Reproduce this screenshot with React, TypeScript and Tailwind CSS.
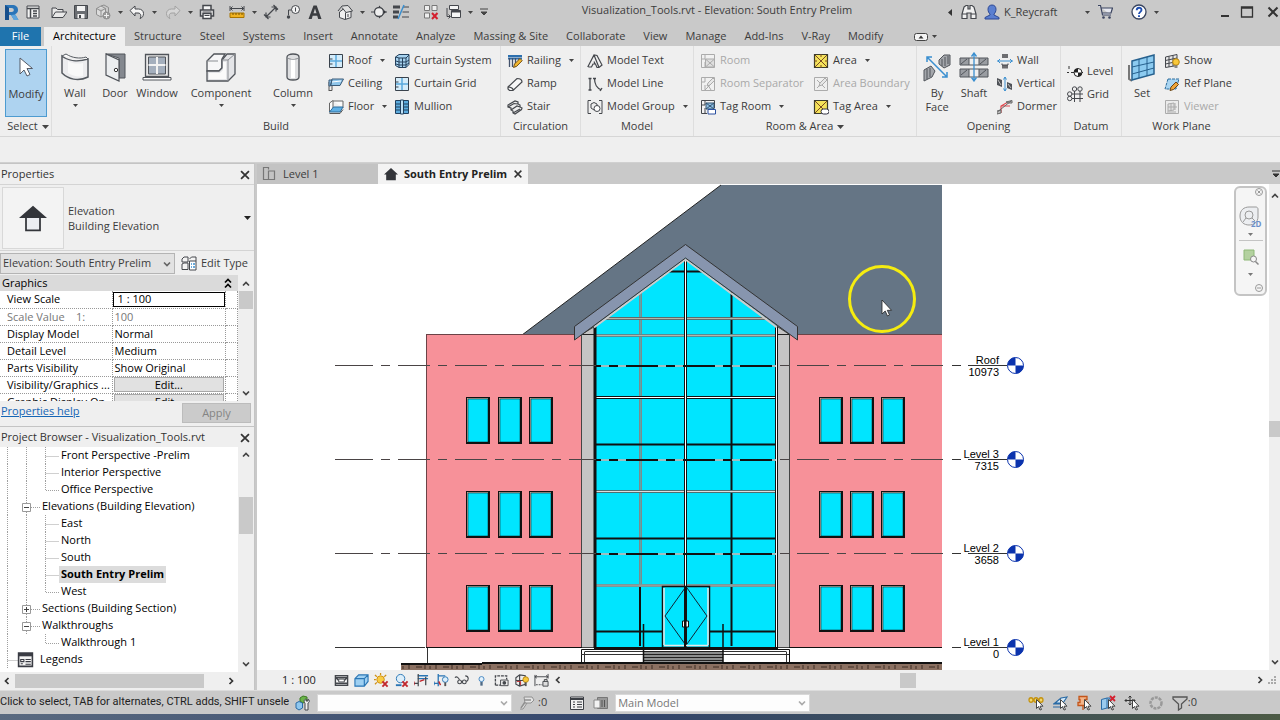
import { clsx } from 'clsx';
import { useState } from 'react';
import type { ReactNode } from 'react';

/* ---------- Icons, drawn on a 16 or 30 unit grid ---------- */

const INK = '#44474c';
const BLUE = '#3a8fd0';

const icons: Record<string, ReactNode> = {
  logo: (
    <>
      <path d="M2 1h7c4 0 6 2 6 5 0 2-1 3.400-3 4.300L15.500 16H11L8 11H6v5H2z" fill="#2a74b8" />
      <path d="M6 4v4h2.500c1.500 0 2.300-.800 2.300-2S10 4 8.500 4z" fill="#c9c9c9" />
      <path d="M2 1l4 3v12H2z" fill="#174f8c" />
      <path d="M8 11l3 5h4.500l-3-5.500z" fill="#5fa5dd" />
    </>
  ),
  home: (
    <>
      <path d="M2 2h12v12H2z" fill="#f4f4f4" stroke={INK} />
      <path d="M2 4.500h12M5.500 4v10M8 7h4M8 9.500h4M8 12h4" stroke={INK} strokeWidth="1.500" />
    </>
  ),
  open: (
    <path d="M1 13.500V4h4l1.500 1.500H12V8M1 13.500L4.500 8H16l-4 5.500z" fill="#e9e9e9" stroke={INK} />
  ),
  save: (
    <>
      <path d="M1.500 1.500h13v13h-13z" fill="#6a6d72" stroke={INK} />
      <path d="M4 2h8v5H4z" fill="#f3f3f3" />
      <path d="M4.500 10h7v4.500h-7z" fill="#f3f3f3" />
      <path d="M6 11h2v3H6z" fill={INK} />
    </>
  ),
  sync: (
    <g fill="#dcdcdc" stroke="#8f8f8f">
      <path d="M1.500 4.500L6 2l4.500 2.500v6L6 13l-4.500-2.500zM1.500 4.500L6 7l4.500-2.500M6 7v6" />
      <path d="M6 2l3-1 4.500 2.500v5" fill="none" />
      <circle cx="11.500" cy="11.500" r="3.500" fill="#9b9b9b" />
      <path d="M9 11.500h5M11.500 9v5" stroke="#eee" />
    </g>
  ),
  undo: (
    <path d="M1 6.500L6 2v3h3.500c3 0 5 2 5 4.500S13 14 11 14.500c1.200-1.500 1.500-5.500-2-5.500H6v3z" fill="#f5f5f5" stroke={INK} />
  ),
  redo: (
    <path d="M15 6.500L10 2v3H6.500c-3 0-5 2-5 4.500S3 14 5 14.500C3.800 13 3.500 9 7 9h3v3z" fill="#d6d6d6" stroke="#a2a2a2" />
  ),
  print: (
    <>
      <path d="M4 1.500h8V6H4zM1.500 6h13v6h-13z" fill="#f5f5f5" stroke={INK} strokeWidth="1.500" />
      <path d="M4 9.500h8v5H4z" fill="#fff" stroke={INK} strokeWidth="1.500" />
      <path d="M5.500 11.500h5M3.500 8h9" stroke={INK} />
    </>
  ),
  measure: (
    <>
      <path d="M1 4.500h14M1 2v5M15 2v5M3.500 2.500l-2 2 2 2M12.500 2.500l2 2-2 2" stroke={INK} fill="none" />
      <path d="M1 9h14v4.500H1z" fill="#f0b323" stroke="#a87400" />
      <path d="M4 9v2M7 9v2M10 9v2M13 9v2" stroke="#7a5500" />
    </>
  ),
  dimension: (
    <path d="M3 13L13 3M3 8.500V13h4.500M13 7.500V3H8.500M1 10.500l4.500 4.500M10.500 1L15 5.500" stroke={INK} fill="none" strokeWidth="1.200" />
  ),
  tag: (
    <>
      <circle cx="10.500" cy="5.500" r="4" fill="#f4f4f4" stroke={INK} />
      <path d="M10.500 3.500v4M6.500 6H3.500v5" stroke={INK} fill="none" />
      <circle cx="3.500" cy="13" r="1.700" fill={INK} />
    </>
  ),
  text: <path d="M1.500 15L6.500 1.500h3.200L14.500 15h-3.300l-1-3.200H5.700l-1 3.200zM6.500 9.300h3L8 4.500z" fill="#3a3c40" />,
  view3d: (
    <>
      <path d="M2.500 8v5.500L8 15.500l6-2V7L9 3z" fill="#f0f0f0" stroke={INK} />
      <path d="M1 7l4-5 6-.500L15.500 7 9 8.500 5 3.500" fill="#e0e0e0" stroke={INK} />
      <path d="M8.500 8.500V15M11 10v3" stroke={INK} />
    </>
  ),
  section: (
    <>
      <path d="M0 8h16" stroke={INK} />
      <path d="M8 1.500L15 8l-7 6.500z" fill="#33353a" />
      <circle cx="8" cy="8" r="4.500" fill="#eee" stroke={INK} strokeWidth="1.300" />
    </>
  ),
  thinLines: (
    <>
      <path d="M0 3h7M0 8h6M0 13h5" stroke={INK} strokeWidth="3" />
      <path d="M10 3h6M9.500 8H16M9 13h7" stroke={INK} />
      <path d="M11 1L5 15" stroke={BLUE} strokeWidth="1.500" />
    </>
  ),
  closeHidden: (
    <>
      <path d="M1.500 1.500h5v5h-5zM9 1.500h5v5H9zM1.500 9h5v5h-5z" fill="#eee" stroke="#777" />
      <path d="M9 9l5.500 6M14.500 9L9 15" stroke="#d4202f" strokeWidth="2" />
    </>
  ),
  switchWin: (
    <>
      <path d="M4.500 1.500h9v4h-9zM6.500 6.500h9v7h-9z" fill="#f5f5f5" stroke={INK} />
      <path d="M6.500 7.500h9" stroke={INK} strokeWidth="2" />
      <path d="M2 4v8.500h3M3.500 10.500l2 2-2 2" stroke={INK} fill="none" />
    </>
  ),
  binoculars: (
    <path d="M3 3l2-1.500h2V5h2V1.500h2L13 3l2 7v4.500h-5V9H6v5.500H1V10zM1 10h5M10 10h5" fill="#f0f0f0" stroke={INK} strokeWidth="1.200" />
  ),
  user: (
    <path d="M8 1c2.500 0 4 1.800 4 4.300 0 2-.900 3.700-2 4.700v1l5 2.500V15H1v-1.500L6 11v-1C4.900 9 4 7.300 4 5.300 4 2.800 5.500 1 8 1z" fill="#5b7fd0" stroke="#2c4794" />
  ),
  cart: (
    <>
      <path d="M1 1.500h2.500L5.500 11H14M4 4h11.500L14 9H5" fill="#e5e7ef" stroke="#3b4460" strokeWidth="1.200" />
      <circle cx="6.500" cy="13.500" r="1.300" fill="#3b4460" />
      <circle cx="12.500" cy="13.500" r="1.300" fill="#3b4460" />
    </>
  ),
  help: (
    <>
      <circle cx="8" cy="8" r="7" fill="#fff" stroke="#38445f" strokeWidth="1.300" />
      <path d="M5.700 6.200C5.700 3 10.500 3 10.500 6c0 1.800-2.500 2-2.500 4M8 11.200v1.800" stroke="#1f4fb2" strokeWidth="1.900" fill="none" />
    </>
  ),
  minimise: <path d="M4 12h8" stroke="#333" strokeWidth="2" />,
  maximise: <path d="M2.500 3h11v10h-11zM2.500 4h11" stroke="#333" fill="none" strokeWidth="1.300" />,
  close: <path d="M3.500 3.500l9 9M12.500 3.500l-9 9" stroke="#333" strokeWidth="2" />,

  roof: (
    <>
      <path d="M1.500 1.500h13v13h-13z" fill="#d4ecfa" stroke="#39424c" />
      <path d="M8 2v12M2 8h12" stroke="#5aa9dd" strokeWidth="1.500" />
      <path d="M1.500 6h3M1.500 11h3" stroke="#39424c" />
    </>
  ),
  ceiling: (
    <>
      <path d="M1 6v9M1 14.500h3V9" stroke="#555" fill="none" />
      <path d="M1 10V4h3l-1.500 6zM4 3h11.500L12 9.500H2.500z" fill="#8ec5ea" stroke="#3b5b78" />
      <path d="M4 6l9-1" stroke="#fff" />
    </>
  ),
  floor: (
    <>
      <path d="M1.500 13.500V4L5 1.500V9M5 2h10v7" fill="#fafafa" stroke="#666" />
      <path d="M1.500 13l4-5H15l-3 5z" fill="#5fb0e5" stroke="#2d6c9c" />
      <path d="M1.500 14.500H12l3-4" stroke="#555" fill="none" />
    </>
  ),
  curtainSystem: (
    <>
      <path d="M1.500 4L5 1.500h10v10l-3 3H5l-3.500-2z" fill="#a7d3f0" stroke="#24405c" />
      <path d="M1.500 4L5 5h7l3-3M12 5v9.500M5 5v9.500M8.500 5v9.500M2 8l3 1h7l3-2M2 11l3 1h7l3-2" stroke="#24405c" fill="none" />
    </>
  ),
  mullion: (
    <>
      <path d="M1.500 1.500h13v13h-13z" fill="#5cacdf" stroke="#21405e" />
      <path d="M1.500 5h13M1.500 8h13M1.500 11h13" stroke="#21405e" strokeWidth="1.200" />
      <path d="M6.500 1h3v14h-3z" fill="#bfe2f7" stroke="#21405e" />
    </>
  ),
  railing: (
    <>
      <path d="M1 3h14M1 5.500h14" stroke="#2c6fae" strokeWidth="2" />
      <path d="M2.500 5v9M5.500 5v9M8.500 5v9M12 5v3" stroke="#42516b" strokeWidth="1.300" />
      <path d="M6.500 14.500l1-3.500L13 5.500l2.200 2.200-5.500 5.600z" fill="#f2b62d" stroke="#765315" />
    </>
  ),
  ramp: (
    <path d="M1 11L10 2.500c3 0 5 1 5 3.500L6 14.500H2.500L1 13zM6 14.500c.500-2-2-3.500-5-3.500" fill="#f7f7f7" stroke={INK} strokeWidth="1.200" />
  ),
  stair: (
    <path d="M1 6l7-4 3 1v2l2 1v2l2 1-.500 1.500L8 15l-2-1v-2l-2-1V9L1 8zM1 8l6-3.500 4 .500M4 11l6-4 3 1M6 14l7-4" fill="#eee" stroke={INK} strokeWidth="1.200" />
  ),
  modelText: (
    <path d="M1 13.500L7 2l3 .500L15 12l-3 2.500h-2L8.500 11H6l-1.500 3H2zM7 2l5 12.500M7 8.500L8 11" fill="#f0f0f0" stroke={INK} strokeWidth="1.200" />
  ),
  modelLine: (
    <path d="M3 3v11M1.500 2.500h3M1.500 14h3M7.500 2c0 7 2 10 7 12M6 2.500h3M13 15l2-3" stroke={INK} strokeWidth="1.300" fill="none" />
  ),
  modelGroup: (
    <>
      <path d="M4 1.500H1v13h3M12 1.500h3v13h-3" stroke={INK} fill="none" />
      <path d="M4 5l3-1.500L10 5v4l-3 2-3-2z" fill="#eee" stroke={INK} />
      <circle cx="10" cy="9.500" r="3" fill="#fff" stroke={INK} />
    </>
  ),
  room: (
    <>
      <path d="M1.500 14.500v-13h13v13zM5 2v4H2M5 9v5" fill="#f4f4f4" stroke={INK} />
      <path d="M5.500 6h9v8h-9zM6 6.500l8 7M14 6.500l-8 7" fill="#c9c9c9" stroke={INK} />
    </>
  ),
  roomSeparator: (
    <>
      <path d="M1.500 14.500v-13h13v13zM5 2v4H2M5 9v5M8 9l3 5M5 14l6-6" fill="#f4f4f4" stroke={INK} />
      <path d="M7 10l1-3 5-5 2 2-5 5z" fill="#ddd" stroke={INK} />
    </>
  ),
  tagRoom: (
    <>
      <path d="M1.500 14.500v-13h13V9M1.500 14.500H7M5 2v4H2M5 9v5" fill="#f4f4f4" stroke={INK} />
      <path d="M6 4h8v6H6zM6 4l8 6M14 4l-8 6" fill="#8fc1e6" stroke="#33526f" />
      <path d="M8 10.500h7.500v4.500H8z" fill="#fff" stroke="#2a4fa0" />
    </>
  ),
  area: (
    <>
      <path d="M1.500 1.500h13v13h-13z" fill="#f5e25a" stroke="#3b3b2c" strokeWidth="1.200" />
      <path d="M2 2l12 12M14 2L2 14M8 1v3M8 12v3M1 8h3M12 8h3" stroke="#7a4a20" />
    </>
  ),
  areaBoundary: (
    <>
      <path d="M1.500 1.500h13v13h-13zM4 4l8 8M4 12l3-3" fill="#f0f0f0" stroke={INK} />
      <path d="M6 10l1-3 5-5 2 2-5 5z" fill="#ddd" stroke={INK} />
    </>
  ),
  tagArea: (
    <>
      <path d="M1.500 1.500h13v13h-13z" fill="#f5e25a" stroke="#3b3b2c" strokeWidth="1.200" />
      <path d="M2 2l12 12M14 2L2 14" stroke="#7a4a20" />
      <rect x="8" y="10" width="8" height="5" rx="2.500" fill="#fff" stroke="#334" />
    </>
  ),
  openWall: (
    <>
      <path d="M5 1h6v4H5zM5 12h6v3.500H5z" fill="#6d6d70" />
      <path d="M5 10.500V12h6v-1.500" stroke={INK} fill="none" />
      <path d="M0 8h16M3 6L1 8l2 2M13 6l2 2-2 2" stroke={BLUE} fill="none" />
    </>
  ),
  vertical: (
    <>
      <path d="M0 2l5 2v7L0 9zM10 6l5 2v6l-5-2z" fill="#4f5258" />
      <path d="M1 4l3 5M11 8l3 4" stroke="#bbb" />
      <path d="M8 1v14M6.500 3.500L8 1l1.500 2.500M6.500 12.500L8 15l1.500-2.500" stroke={BLUE} fill="none" />
    </>
  ),
  dormer: (
    <>
      <path d="M4 14V7l7-4M4 7h9" stroke="#e0474c" fill="none" strokeWidth="1.200" />
      <path d="M9 3l6-1.500V4h-4zM0 12l4-1v3l-4 1zM1 12.500L14 2" fill="#bbb" stroke="#666" />
    </>
  ),
  level: (
    <>
      <path d="M2 3v3M0 9.500h2M4 9.500h12" stroke="#333" />
      <circle cx="11" cy="9.500" r="4" fill="#fff" stroke="#222" />
      <path d="M11 9.500v-4a4 4 0 0 0-4 4h8a4 4 0 0 1-4 4z" fill="#222" />
    </>
  ),
  grid: (
    <g stroke={INK} fill="none">
      <path d="M5 8h11M5 12.500h11M7.500 5v11M13 5v11" />
      <circle cx="7.500" cy="3" r="2.200" />
      <circle cx="13" cy="3" r="2.200" />
      <circle cx="2.700" cy="8" r="2.200" />
      <circle cx="2.700" cy="12.500" r="2.200" />
    </g>
  ),
  show: (
    <>
      <path d="M1.500 4L13 1.500v11L1.500 14.500zM5 3.500v10.500M9 2.500V13M1.500 7.500L13 5M1.500 11L13 8.500" fill="#e8e8e8" stroke={INK} />
      <circle cx="12" cy="9" r="3.300" fill="#f8c83a" stroke="#b98710" />
      <path d="M10.500 12.500h3V15h-3z" fill="#888" />
    </>
  ),
  refPlane: (
    <>
      <path d="M4 3h11l-3 10H1z" fill="#a9d5f2" stroke="#2d6c9c" strokeDasharray="3 1" />
      <path d="M6 14.500l1-3.500 5-5 2.500 2.500-5 5z" fill="#efa53a" stroke="#6b4514" />
    </>
  ),
  viewer: (
    <>
      <path d="M1.500 1.500h13v13h-13z" fill="#e6e6e6" stroke={INK} />
      <path d="M4 5l6-1v7l-6 1zM11 4v7M4 8h9M7 5v7M3 13h9" fill="#ccc" stroke={INK} />
    </>
  ),
  elevation: (
    <>
      <path d="M0 8L8 1l8 7z" fill="#33353a" />
      <path d="M4 7.500h8V15H4z" fill="#eceef2" stroke="#33353a" />
    </>
  ),
  elevationTab: <path d="M0 8.500L8 1l8 7.500h-2.500V15h-11V8.500z" fill="#33353a" />,
  plan: (
    <path d="M2.500 4.500V1.500h5v2M2.500 4.500v9h11V5h-6v8.500" fill="none" stroke="#777" strokeWidth="1.200" />
  ),
  editType: (
    <>
      <path d="M1 4l2-2h4v5H1zM8.500 4l2-2h4.500v4M1 9l2-1h4v6.500H1z" fill="#f4f4f4" stroke={INK} />
      <path d="M8.500 6h6.500v9H8.500z" fill="#fff" stroke={INK} />
      <path d="M10 9h1M12 9h2M10 12h1M12 12h2" stroke={BLUE} strokeWidth="1.500" />
    </>
  ),
  legends: (
    <>
      <path d="M1.500 2h13v12.500h-13z" fill="#f4f4f4" stroke="#3a3c44" strokeWidth="1.500" />
      <path d="M1 3.500h14" stroke="#3a3c44" strokeWidth="3" />
      <path d="M3.500 8h3v2h-3zM8 8h5M8 10h5M3.500 12h2M8 12.500h5" stroke="#3a3c44" />
    </>
  ),

  detail: (
    <>
      <path d="M1.500 3h13v10h-13z" fill="#fff" stroke={INK} strokeWidth="1.500" />
      <path d="M2 5h12M2 11h12M2 5l3 3M14 5l-3 3" stroke={INK} strokeWidth="1.500" />
      <path d="M5 6.500h6v3H5z" fill="#fff" stroke={INK} />
    </>
  ),
  visual: (
    <path d="M1 6l4-4h10v7l-4 5H1zM1 6h10v8M11 6l4-4" fill="#9fd0f2" stroke="#2a76b5" strokeWidth="1.200" />
  ),
  sun: (
    <>
      <circle cx="7" cy="7" r="4" fill="#f8cc45" stroke="#cf8f12" />
      <path d="M7 0v2M1 2l2 2M0 7h2M1 12l2-2M13 2l-2 2" stroke="#cf8f12" strokeWidth="1.300" />
      <path d="M9 9l5.500 5.500M14.500 9L9 14.500" stroke="#c1272d" strokeWidth="2" />
    </>
  ),
  shadow: (
    <>
      <circle cx="7" cy="6" r="4.500" fill="#dceefa" stroke="#2a76b5" />
      <path d="M2 13h6" stroke="#2a76b5" strokeWidth="2" />
      <path d="M9 9l5.500 5.500M14.500 9L9 14.500" stroke="#c1272d" strokeWidth="2" />
    </>
  ),
  crop: (
    <>
      <path d="M4 3h11M4 6h11" stroke="#2a76b5" strokeWidth="1.500" />
      <path d="M4.500 1v13M12.500 4v9M0 11h4" stroke={INK} strokeWidth="1.300" />
      <path d="M6 9l5-2M0 9v4" stroke="#c1272d" strokeWidth="1.300" />
    </>
  ),
  cropShow: (
    <>
      <path d="M4 3h8M4.500 1v13M0 11h4M0 9v4" stroke="#2a76b5" strokeWidth="1.400" />
      <path d="M7 13l-2-4" stroke="#c1272d" strokeWidth="1.500" />
      <circle cx="12" cy="7" r="3" fill="#dceefa" stroke="#2a76b5" />
      <path d="M12 10v4" stroke="#555" strokeWidth="2" />
    </>
  ),
  glasses: (
    <path d="M1 5c2-2 4 0 5 3M4 9.500a2 2 0 1 0 4 0 2 2 0 1 0-4 0M9 9.500a2 2 0 1 0 4 0 2 2 0 1 0-4 0M13 9c3-1 3-6-1-6" stroke={INK} strokeWidth="1.200" fill="none" />
  ),
  bulb: (
    <>
      <circle cx="8" cy="6.500" r="2.700" fill="#e4f2fc" stroke="#4385c0" />
      <path d="M8 9.500v4" stroke="#4d6985" strokeWidth="2.500" />
    </>
  ),
  camera: (
    <>
      <path d="M1.500 13V3h12v4M1.500 13h6" stroke={INK} strokeWidth="1.400" strokeDasharray="3 1" fill="none" />
      <path d="M7 7.500h8v6H7z" fill="#eee" stroke={INK} />
      <circle cx="11" cy="10.500" r="2" fill={INK} />
    </>
  ),
  analytic: (
    <>
      <path d="M2 5l4-3 6 1v9l-6 2-4-2zM2 8h9M6 3v11" fill="#eee" stroke={INK} strokeWidth="1.200" />
      <path d="M3 9h4v4" stroke="#c1272d" fill="none" />
      <circle cx="12.500" cy="7" r="3" fill="#f8c83a" stroke="#b98710" />
      <path d="M12.500 10v4" stroke="#555" strokeWidth="2" />
    </>
  ),
  constraint: (
    <>
      <path d="M1 2v12M15 1v5M1 4h14M3 2.500L1 4l2 1.500M13 2.500L15 4l-2 1.500" stroke={INK} fill="none" />
      <path d="M2 12.500h7" stroke={INK} strokeDasharray="2 1" />
      <path d="M9.500 9h5.500v5H9.500zM11 9V7h3v2" fill="#ddd" stroke={INK} />
    </>
  ),
  worksets: (
    <>
      <path d="M5 3l3-2 4 1v4L8 8 5 6z" fill="#6ab44a" stroke="#3b7a22" />
      <path d="M1 8l3-1.500L7.500 8v5L4 15l-3-2z" fill="#8fc7ee" stroke="#2a6ba5" />
      <path d="M10 15V8c-2-2 0-4 1-4v2h2V4c1.500 1 2 3 0 4v7z" fill="#f2f2f2" stroke={INK} />
    </>
  ),
  editable: (
    <>
      <path d="M5 2h8l2 3-3 3H6zM8 8l-4 6H1" fill="#e3e3e3" stroke="#909090" />
      <path d="M2 13l4-6M5 5h7" stroke="#909090" strokeWidth="1.500" />
    </>
  ),
  options: (
    <>
      <path d="M1.500 2h13v12.500h-13z" fill="#f0f0f0" stroke="#3c3f45" />
      <path d="M1.500 4h13" stroke="#3c3f45" strokeWidth="2" />
      <path d="M4 7h2M8 7h5M4 9.500h2M8 9.500h5M4 12h2M8 12h5" stroke="#3c3f45" />
    </>
  ),
  optionSet: (
    <>
      <path d="M4.500 2.500h10v11h-10z" fill="#999" stroke="#777" />
      <path d="M1 5h6v8H1z" fill="#f2f2f2" stroke="#888" />
      <path d="M9 5v7M11.500 5v7" stroke="#555" />
    </>
  ),
  funnel: <path d="M1 2h14v2l-5.500 5v4L6.500 15V9L1 4z" fill="#c9c9c9" stroke="#555" strokeWidth="1.300" />,
  progress: <circle cx="8" cy="8" r="5.500" fill="none" stroke="#999" strokeWidth="2.500" strokeDasharray="3 1" />,
  selectLinks: (
    <path d="M1 5c0-3 4-3 4 0s-4 3-4 0M6 5c0-3 4-3 4 0s-4 3-4 0M11 5c0-3 4-3 4 0s-4 3-4 0" fill="#f5d76a" stroke="#c49310" strokeWidth="1.300" />
  ),
  selectUnderlay: <path d="M1 9h13M1 12h11M3 8l6-5 6-1-4 6z" fill="#d4eafa" stroke="#2a6ba5" strokeWidth="1.200" />,
  selectPinned: <path d="M3 1.500h8v3H9.500v3H12v3H2v-3h2v-3H3zM7 10v5" fill="#f3b58a" stroke="#c4551a" strokeWidth="1.300" />,
  selectFace: (
    <>
      <path d="M1.500 4.500L7 3v10l-5.500 1.500zM7 3h3v10H7" fill="#9bcbee" stroke="#2a6ba5" />
      <path d="M10 1l5 5M15 1l-5 5" stroke="#d4202f" strokeWidth="1.800" />
    </>
  ),
  dragSelect: <path d="M6 1v9M1 5.500h10M4.500 2.500L6 1l1.500 1.500M4.500 8.500L6 10l1.500-1.500M2.500 4L1 5.500 2.500 7M9.500 4L11 5.500 9.500 7" fill="none" stroke="#333" />,
};

const bigIcons: Record<string, ReactNode> = {
  modify: <path d="M9 5v16l4-4 3 6 3-1.500-3-6h5.500z" fill="#fff" stroke="#555a66" />,
  wall: (
    <>
      <path d="M2 4c6 5 16 6 26 3v18c-10 5-20 2-26-4z" fill="#ececee" stroke="#555a60" strokeWidth="1.500" />
      <path d="M2 4l4-2c6 4 14 5 20 3l2 2" fill="#fff" stroke="#555a60" />
      <path d="M8 9c5 3 10 3 15 2v13c-5 1-10 0-15-3z" fill="#f8f8f8" />
    </>
  ),
  door: (
    <>
      <path d="M6 2h19v24h-6V6z" fill="#84888f" stroke="#50545a" />
      <path d="M6 2l13 6v21L6 23z" fill="#eceef0" stroke="#50545a" strokeWidth="1.200" />
      <circle cx="16" cy="18" r="1.700" fill="#fff" stroke="#333" />
    </>
  ),
  window: (
    <>
      <path d="M3.500 2.500h23v22h-23z" fill="#e9e9e9" stroke="#50545a" strokeWidth="1.300" />
      <path d="M6.500 5h17v17h-17z" fill="#a4afbd" stroke="#50545a" />
      <path d="M15 5v17M6.500 13h17" stroke="#f2f2f2" strokeWidth="2" />
      <path d="M1 25.500h28V28H1z" fill="#fff" stroke="#50545a" />
    </>
  ),
  component: (
    <>
      <path d="M1 9l7-7h11l-3 5v9l-3 3H1z" fill="#f6f6f7" stroke="#50545a" strokeWidth="1.300" />
      <path d="M16 8l5-6h8v20l-7 7H1V19h12l3-3z" fill="#e4e5e8" stroke="#50545a" strokeWidth="1.300" />
      <path d="M1 9h11M16 8h6v21M22 8l7-6" fill="none" stroke="#8a8d92" />
      <path d="M3 21h11l3-3v-8h3v17H3z" fill="#fafafa" />
    </>
  ),
  column: (
    <>
      <path d="M9 5c0-4 12-4 12 0v20c0 4-12 4-12 0z" fill="#dedfe1" stroke="#50545a" strokeWidth="1.300" />
      <path d="M13 6h4v20h-4z" fill="#fff" />
      <path d="M9 5c0 3 12 3 12 0" fill="none" stroke="#8a8d92" />
    </>
  ),
  byFace: (
    <>
      <path d="M17 12V8l5-5h6v10l-6 3zM2 18l7-4 4 5-3 6-8 4z" fill="#a4a7ac" stroke="#50545a" />
      <path d="M20 7v7M23 5v9M26 4v8M5 17v10M8 16v9" stroke="#50545a" />
      <path d="M5 5l20 20M5 10V5h5M25 20v5h-5" stroke={BLUE} strokeWidth="1.500" fill="none" />
    </>
  ),
  shaft: (
    <>
      <path d="M1 6h9v7H1zM20 6h9v7h-9zM1 17h9v8H1zM20 17h9v8h-9z" fill="#9a9da2" stroke="#50545a" />
      <path d="M10 6h10M10 13h10M10 17h10M10 25h10" stroke="#50545a" />
      <path d="M2 12l6-5M21 12l6-5M2 23l6-5M21 23l6-5" stroke="#50545a" />
      <path d="M15 1v28M12.500 4.500L15 1l2.500 3.500M12.500 25.500L15 29l2.500-3.500" stroke={BLUE} strokeWidth="1.300" fill="none" />
    </>
  ),
  set: (
    <>
      <path d="M2 13v14l3 2" stroke="#777" fill="none" strokeWidth="2" />
      <path d="M5 9l22-6v19L5 28z" fill="#8ccbf0" stroke="#27618e" strokeWidth="1.500" />
      <path d="M12 7v19M20 5v19M5 15l22-5M5 22l22-6" stroke="#27618e" fill="none" />
    </>
  ),
};

function Icon({ name, size = 'size-4' }: { name: string; size?: string }) {
  return (
    <svg aria-hidden="true" className={clsx('shrink-0', size)} fill="none" viewBox="0 0 16 16">
      {icons[name]}
    </svg>
  );
}

function Caret({ className }: { className?: string }) {
  return (
    <svg aria-hidden="true" className={clsx('h-[3px] w-[5px] shrink-0', className)} viewBox="0 0 5 3">
      <path d="M0 0h5L2.500 3z" fill="#444" />
    </svg>
  );
}

function Chevron({ turn, className }: { turn?: string; className?: string }) {
  return (
    <svg aria-hidden="true" className={clsx('size-2 shrink-0', turn, className)} fill="none" viewBox="0 0 8 8">
      <path d="M1 2.500l3 3 3-3" stroke="currentColor" strokeWidth="1.700" />
    </svg>
  );
}

/* ---------- Title bar ---------- */

function BarButton({ icon, label, className }: { icon: string; label: string; className?: string }) {
  return (
    <button aria-label={label} className={clsx('flex h-6 w-[22px] shrink-0 items-center justify-center', className)}>
      <Icon name={icon} />
    </button>
  );
}

function BarCaret({ label }: { label: string }) {
  return (
    <button aria-label={label} className="flex h-6 w-3 shrink-0 items-center justify-center">
      <Caret />
    </button>
  );
}

function TitleBar() {
  return (
    <header className="flex h-[27px] shrink-0 items-start">
      <div className="flex items-center">
        <BarButton icon="logo" label="Application" />
        <BarButton icon="home" label="Home" />
        <BarButton className="ml-1" icon="open" label="Open" />
        <BarButton icon="save" label="Save" />
        <BarButton icon="sync" label="Synchronize" />
        <BarCaret label="Synchronize options" />
        <BarButton icon="undo" label="Undo" />
        <BarCaret label="Undo history" />
        <BarButton className="ml-[2px]" icon="redo" label="Redo" />
        <BarCaret label="Redo history" />
        <BarButton icon="print" label="Print" />
        <BarButton className="ml-2" icon="measure" label="Measure" />
        <BarCaret label="Measure options" />
        <BarButton icon="dimension" label="Aligned dimension" />
        <BarButton icon="tag" label="Tag by category" />
        <BarButton icon="text" label="Text" />
        <BarButton className="ml-2" icon="view3d" label="Default 3D view" />
        <BarCaret label="3D view options" />
        <BarButton icon="section" label="Section" />
        <BarButton icon="thinLines" label="Thin lines" />
        <BarButton className="ml-2" icon="closeHidden" label="Close hidden windows" />
        <BarButton icon="switchWin" label="Switch windows" />
        <BarCaret label="Window list" />
        <button aria-label="Customize toolbar" className="flex h-6 w-4 items-center justify-center">
          <svg aria-hidden="true" className="h-2 w-2" viewBox="0 0 8 8">
            <path d="M0 1h8M1 4h6L4 7z" fill="#444" stroke="#444" />
          </svg>
        </button>
      </div>
      <h1 className="flex-1 truncate text-center text-[11px] leading-[19px]">
        Visualization_Tools.rvt - Elevation: South Entry Prelim
      </h1>
      <div className="-mr-1 flex items-center">
        <button aria-label="Collapse search" className="flex h-6 w-4 items-center justify-center">
          <svg aria-hidden="true" className="h-[7px] w-1" viewBox="0 0 4 7">
            <path d="M4 0v7L0 3.500z" fill="#333" />
          </svg>
        </button>
        <BarButton icon="binoculars" label="Search" />
        <button className="flex h-6 w-[114px] items-center text-[11px]">
          <span className="mr-1 flex w-5 justify-end">
            <Icon name="user" />
          </span>
          K_Reycraft
          <Caret className="mr-1 ml-auto" />
        </button>
        <BarButton icon="cart" label="App store" />
        <BarButton className="ml-3" icon="help" label="Help" />
        <BarCaret label="Help menu" />
        <BarButton className="ml-[52px]" icon="minimise" label="Minimize" />
        <BarButton icon="maximise" label="Restore" />
        <BarButton className="ml-1" icon="close" label="Close" />
      </div>
    </header>
  );
}

/* ---------- Ribbon ---------- */

const tabs = [
  'Architecture',
  'Structure',
  'Steel',
  'Systems',
  'Insert',
  'Annotate',
  'Analyze',
  'Massing & Site',
  'Collaborate',
  'View',
  'Manage',
  'Add-Ins',
  'V-Ray',
  'Modify',
];

function Tabs() {
  const [active, setActive] = useState('Architecture');

  return (
    <nav className="flex h-[19px] shrink-0 text-[11px]">
      <button className="mr-[3px] w-[41px] bg-[#1f74ae] text-white">File</button>
      {tabs.map((tab) => (
        <button
          className={clsx('px-[9px] whitespace-nowrap', tab === active && 'bg-[#efefef] text-black')}
          key={tab}
          onClick={() => setActive(tab)}
        >
          {tab}
        </button>
      ))}
      <button aria-label="Minimize ribbon" className="ml-[22px] flex items-center gap-1">
        <svg aria-hidden="true" className="h-2 w-[14px]" viewBox="0 0 14 8">
          <rect fill="#f4f4f4" height="7" rx="2" stroke="#444" width="13" x=".5" y=".5" />
          <path d="M4.500 5.500h5L7 2.500z" fill="#333" />
        </svg>
        <Caret />
      </button>
    </nav>
  );
}

interface ToolProps {
  icon: string;
  label: string;
  menu?: boolean;
  disabled?: boolean;
}

function Tool({ icon, label, menu, disabled }: ToolProps) {
  return (
    <button
      className={clsx('flex h-[23px] items-center gap-1 whitespace-nowrap', disabled && 'text-[#a9a9a9]')}
      disabled={disabled}
    >
      <span className={clsx('flex', disabled && 'opacity-40 grayscale')}>
        <Icon name={icon} />
      </span>
      {label}
      {menu && <Caret className="ml-1" />}
    </button>
  );
}

function BigTool({ icon, label, menu, className }: ToolProps & { className?: string }) {
  return (
    <button className={clsx('flex h-[68px] shrink-0 flex-col items-center pt-[3px]', className)}>
      <svg aria-hidden="true" className="size-[30px] shrink-0" fill="none" viewBox="0 0 30 30">
        {bigIcons[icon]}
      </svg>
      <span className="mt-1 leading-[14px]">{label}</span>
      {menu && <Caret className="mt-1" />}
    </button>
  );
}

function Panel({ title, menu, className, children }: { title: string; menu?: boolean; className: string; children: ReactNode }) {
  return (
    <section className={clsx('flex shrink-0 flex-col border-r border-[#dedede]', className)}>
      <div className="flex h-[71px] pt-[3px]">{children}</div>
      <h2 className="flex h-5 items-center justify-center gap-1 whitespace-nowrap">
        {title}
        {menu && (
          <svg aria-hidden="true" className="h-1 w-[7px]" viewBox="0 0 7 4">
            <path d="M0 0h7L3.500 4z" fill="#444" />
          </svg>
        )}
      </h2>
    </section>
  );
}

function Ribbon() {
  return (
    <div className="flex h-[91px] shrink-0 overflow-hidden border-b border-[#d6d6d6] bg-[#efefef] text-[11px]">
      <Panel className="w-[52px] pl-[5px]" menu title="Select">
        <BigTool className="w-[42px] border border-[#4d9bd0] bg-[#aed3f0]" icon="modify" label="Modify" />
      </Panel>
      <Panel className="w-[449px]" title="Build">
        <BigTool className="w-[46px]" icon="wall" label="Wall" menu />
        <BigTool className="w-[34px]" icon="door" label="Door" />
        <BigTool className="w-[50px]" icon="window" label="Window" />
        <BigTool className="w-[78px]" icon="component" label="Component" menu />
        <BigTool className="w-[66px]" icon="column" label="Column" menu />
        <div className="ml-[2px] w-[66px]">
          <Tool icon="roof" label="Roof" menu />
          <Tool icon="ceiling" label="Ceiling" />
          <Tool icon="floor" label="Floor" menu />
        </div>
        <div>
          <Tool icon="curtainSystem" label="Curtain System" />
          <Tool icon="roof" label="Curtain Grid" />
          <Tool icon="mullion" label="Mullion" />
        </div>
      </Panel>
      <Panel className="w-[80px]" title="Circulation">
        <div className="pl-[6px]">
          <Tool icon="railing" label="Railing" menu />
          <Tool icon="ramp" label="Ramp" />
          <Tool icon="stair" label="Stair" />
        </div>
      </Panel>
      <Panel className="w-[113px]" title="Model">
        <div className="pl-[6px]">
          <Tool icon="modelText" label="Model Text" />
          <Tool icon="modelLine" label="Model Line" />
          <Tool icon="modelGroup" label="Model Group" menu />
        </div>
      </Panel>
      <Panel className="w-[223px]" menu title="Room & Area">
        <div className="w-[119px] pl-[6px]">
          <Tool disabled icon="room" label="Room" />
          <Tool disabled icon="roomSeparator" label="Room Separator" />
          <Tool icon="tagRoom" label="Tag Room" menu />
        </div>
        <div>
          <Tool icon="area" label="Area" menu />
          <Tool disabled icon="areaBoundary" label="Area Boundary" />
          <Tool icon="tagArea" label="Tag Area" menu />
        </div>
      </Panel>
      <Panel className="w-[144px]" title="Opening">
        <BigTool className="w-[40px] px-1" icon="byFace" label="By Face" />
        <BigTool className="w-[34px]" icon="shaft" label="Shaft" />
        <div className="pl-[6px]">
          <Tool icon="openWall" label="Wall" />
          <Tool icon="vertical" label="Vertical" />
          <Tool icon="dormer" label="Dormer" />
        </div>
      </Panel>
      <Panel className="w-[61px]" title="Datum">
        <div className="flex flex-col justify-center pl-[6px]">
          <Tool icon="level" label="Level" />
          <Tool icon="grid" label="Grid" />
        </div>
      </Panel>
      <Panel className="w-[119px] border-none" title="Work Plane">
        <BigTool className="w-[40px]" icon="set" label="Set" />
        <div className="pl-[2px]">
          <Tool icon="show" label="Show" />
          <Tool icon="refPlane" label="Ref Plane" />
          <Tool disabled icon="viewer" label="Viewer" />
        </div>
      </Panel>
    </div>
  );
}

/* ---------- Docked palettes ---------- */

function PaletteHeader({ title }: { title: string }) {
  return (
    <div className="flex h-[19px] shrink-0 items-center justify-between pr-[2px] pl-[1px] text-[#333]">
      <h2>{title}</h2>
      <button aria-label={`Close ${title}`}>
        <Icon name="close" size="size-[14px]" />
      </button>
    </div>
  );
}

const properties = [
  { label: 'View Scale', value: '1 : 100', kind: 'current' },
  { label: 'Scale Value    1:', value: '100', kind: 'readonly' },
  { label: 'Display Model', value: 'Normal', kind: 'text' },
  { label: 'Detail Level', value: 'Medium', kind: 'text' },
  { label: 'Parts Visibility', value: 'Show Original', kind: 'text' },
  { label: 'Visibility/Graphics ...', value: 'Edit...', kind: 'button' },
  { label: 'Graphic Display Op...', value: 'Edit...', kind: 'button' },
];

function Properties() {
  return (
    <section className="flex shrink-0 flex-col border-b border-[#c4c4c4] pt-[1px]">
      <PaletteHeader title="Properties" />
      <button className="flex h-[67px] items-center border-y border-[#d4d4d4] pl-[2px] text-left">
        <span className="flex h-[62px] w-[62px] items-center justify-center border border-[#d8d8d8] bg-[#f3f3f3]">
          <Icon name="elevation" size="size-7" />
        </span>
        <span className="ml-1 leading-[15px]">
          Elevation
          <br />
          Building Elevation
        </span>
        <svg aria-hidden="true" className="mr-[3px] ml-auto h-1 w-[7px]" viewBox="0 0 7 4">
          <path d="M0 0h7L3.500 4z" fill="#222" />
        </svg>
      </button>
      <div className="flex h-6 items-center">
        <div className="relative">
          <select
            aria-label="Element"
            className="block h-[21px] w-[175px] appearance-none border border-[#b4b4b4] bg-[#e2e2e2] pl-[2px] text-[11px]"
          >
            <option>Elevation: South Entry Prelim</option>
          </select>
          <Chevron className="pointer-events-none absolute top-[7px] right-1 text-[#666]" />
        </div>
        <button className="ml-[6px] flex items-center gap-1 whitespace-nowrap">
          <Icon name="editType" />
          Edit Type
        </button>
      </div>
      <div className="flex h-[126px] overflow-hidden text-black">
        <div className="flex-1 bg-white">
          <div className="flex h-4 items-center justify-between bg-[#dadada] px-[2px]">
            Graphics
            <button aria-label="Collapse Graphics" className="mr-1 flex flex-col">
              <Chevron className="-mb-[3px]" turn="rotate-180" />
              <Chevron turn="rotate-180" />
            </button>
          </div>
          <table className="w-full table-fixed border-collapse">
            <tbody>
              {properties.map(({ label, value, kind }) => (
                <tr className={clsx('h-[17px]', kind === 'readonly' && 'text-[#777]')} key={label}>
                  <th className="w-[112px] border-r border-b border-dotted border-[#999] p-0 pl-[7px] text-left leading-4 font-normal whitespace-pre">
                    {label}
                  </th>
                  <td className="border-r border-b border-dotted border-[#999] p-0 leading-4">
                    {kind === 'current' && (
                      <input
                        aria-label={label}
                        className="block h-[15px] w-full border border-black bg-white pl-1"
                        defaultValue={value}
                      />
                    )}
                    {kind === 'button' && (
                      <button className="mx-auto block h-[15px] w-[110px] border border-[#a8a8a8] bg-[#e1e1e1] leading-[13px]">
                        {value}
                      </button>
                    )}
                    {(kind === 'text' || kind === 'readonly') && <span className="pl-[2px]">{value}</span>}
                  </td>
                  <td className="w-[12px] border-r border-b border-dotted border-[#999] p-0" />
                </tr>
              ))}
            </tbody>
          </table>
        </div>
        <div className="flex w-4 flex-col items-center bg-[#efefef] py-1 text-[#444]">
          <Chevron className="my-[1px]" turn="rotate-180" />
          <div className="mt-[2px] h-[18px] w-[14px] bg-[#c9c9c9]" />
          <Chevron className="mt-auto" />
        </div>
      </div>
      <div className="flex h-[25px] items-start justify-between pr-[3px] pl-[1px]">
        <a className="pt-[2px] text-[#1565b5] underline" href="#help">
          Properties help
        </a>
        <button className="mt-[2px] h-[20px] w-[69px] border border-[#bcbcbc] bg-[#cbcbcb] text-[#848484]" disabled>
          Apply
        </button>
      </div>
    </section>
  );
}

interface TreeItem {
  label: string;
  depth: 0 | 1 | 2;
  toggle?: '+' | '-';
  last?: boolean;
}

const tree: TreeItem[] = [
  { label: 'Front Perspective -Prelim', depth: 2 },
  { label: 'Interior Perspective', depth: 2 },
  { label: 'Office Perspective', depth: 2, last: true },
  { label: 'Elevations (Building Elevation)', depth: 1, toggle: '-' },
  { label: 'East', depth: 2 },
  { label: 'North', depth: 2 },
  { label: 'South', depth: 2 },
  { label: 'South Entry Prelim', depth: 2 },
  { label: 'West', depth: 2, last: true },
  { label: 'Sections (Building Section)', depth: 1, toggle: '+' },
  { label: 'Walkthroughs', depth: 1, toggle: '-' },
  { label: 'Walkthrough 1', depth: 2, last: true },
  { label: 'Legends', depth: 0 },
];

// dotted connector lines in front of a tree row
function Branch({ item, trunk }: { item: TreeItem; trunk: boolean }) {
  return (
    <svg aria-hidden="true" className="h-[17px] w-[59px] shrink-0" fill="none" viewBox="0 0 59 17">
      <g stroke="#a0a0a0" strokeDasharray="1 1">
        <path d="M7.500 0v17" />
        {trunk && <path d="M26.500 0v17" />}
        {item.depth === 2 && <path d={item.last ? 'M45.500 0v9.500H59' : 'M45.500 0v17M45.500 9.500H59'} />}
        {item.depth === 1 && <path d="M31 9.500h10" />}
        {item.depth === 0 && <path d="M7.500 9.500h11" />}
      </g>
      {item.toggle && (
        <>
          <path d="M22.500 5.500h8v8h-8z" fill="#fff" stroke="#999" />
          <path d={item.toggle === '+' ? 'M24 9.500h5M26.500 7v5' : 'M24 9.500h5'} stroke="#444" />
        </>
      )}
    </svg>
  );
}

function ProjectBrowser() {
  const [selected, setSelected] = useState('South Entry Prelim');

  return (
    <section className="flex min-h-0 flex-1 flex-col pt-[1px]">
      <PaletteHeader title="Project Browser - Visualization_Tools.rvt" />
      <div className="flex min-h-0 flex-1 text-black">
        <ul className="flex-1 overflow-hidden bg-white">
          {tree.map((item, index) => (
            <li className="flex h-[17px] items-center" key={item.label}>
              <Branch item={item} trunk={index < 11} />
              {item.depth === 0 && <Icon name="legends" size="-ml-[42px] mr-1 size-[17px]" />}
              <button
                className={clsx(
                  'h-[17px] px-[2px] whitespace-nowrap',
                  item.depth === 1 && '-ml-[19px]',
                  item.label === selected && 'bg-[#dcdcdc] font-bold',
                )}
                onClick={() => setSelected(item.label)}
              >
                {item.label}
              </button>
            </li>
          ))}
        </ul>
        <div className="flex w-4 flex-col items-center bg-[#efefef] py-1 text-[#444]">
          <Chevron turn="rotate-180" />
          <div className="mt-[38px] h-[37px] w-[14px] bg-[#c9c9c9]" />
          <Chevron className="mt-auto" />
        </div>
      </div>
      <div className="flex h-[18px] shrink-0 items-center px-[3px] text-[#333]">
        <Chevron turn="rotate-90" />
        <div className="ml-1 h-[14px] w-[189px] bg-[#c9c9c9]" />
        <Chevron className="ml-[23px]" turn="-rotate-90" />
      </div>
    </section>
  );
}

/* ---------- Elevation drawing ---------- */

const GLASS = '#00e5ff';
const levels = [
  { name: 'Roof', height: '10973', y: 365.5 },
  { name: 'Level 3', height: '7315', y: 459.5 },
  { name: 'Level 2', height: '3658', y: 553.5 },
  { name: 'Level 1', height: '0', y: 647.5 },
];
const windowColumns = [466, 498, 529, 819, 850, 881];
const windowRows = [397, 491, 585];

function FramedWindow({ x, y }: { x: number; y: number }) {
  return (
    <g>
      <path d={`M${x} ${y}h24v47h-24z`} fill="#111" />
      <path d={`M${x + 1} ${y + 1}h21v44h-21z`} fill="#a9a59a" />
      <path d={`M${x + 2} ${y + 2}h20v43h-20z`} fill={GLASS} stroke="#111" strokeWidth=".5" />
    </g>
  );
}

// a mullion seen from the front: dark edges with a pale core
function Mullion({ d, core = '#fff', edge = '#111' }: { d: string; core?: string; edge?: string }) {
  return (
    <>
      <path d={d} stroke={edge} strokeWidth="3" />
      <path d={d} stroke={core} />
    </>
  );
}

function ElevationDrawing() {
  return (
    <svg
      aria-label="South entry elevation"
      className="h-[487px] w-[800px] shrink-0"
      fill="none"
      role="img"
      viewBox="257 184 800 487"
    >
      <defs>
        <pattern height="6" id="soil" patternUnits="userSpaceOnUse" width="27" x="401" y="664">
          <path d="M0 0h27v6H0z" fill="#8b7061" />
          <path d="M2 2v3M8 1v4M15 3h6M24 1v4" stroke="#3d2c22" />
        </pattern>
      </defs>

      {/* Main roof and walls */}
      <path d="M721 185h221v150H522z" fill="#657585" />
      <path d="M522 335l199-150" stroke="#222" />
      <path d="M426 335h516v312H426z" fill="#f79199" />
      <path d="M426 334.500h516" stroke="#6b4347" />
      <path d="M426.500 335v312" stroke="#6b4347" />

      {/* Piers */}
      <path d="M581.500 334.500l13-8v321h-13zM776.500 326l13 8.500v313h-13z" fill="#c5c4c4" stroke="#444" />
      <path d="M581.500 334.500h13M777.500 334.500h12" stroke="#222" />

      {/* Curtain wall */}
      <path d="M595 326l90.500-68 91 68v321H595z" fill={GLASS} />
      <path d="M640 585v61M731.500 292v354" stroke="#111" strokeWidth="2" />
      <Mullion core="#55a9ad" d="M640.500 292v293" edge="#7b8c8e" />
      <path d="M667 271.500h37M595 444.500h181M595 538.500h181M595 631.500h67M710 631.500h66" stroke="#111" strokeWidth="2" />
      <Mullion core="#b5b5a8" d="M605 318.500h162" edge="#5b6d6e" />
      <Mullion core="#b5b5a8" d="M596 335.500h180" edge="#5b8a90" />
      <Mullion d="M596 397.500h180" />
      <Mullion core="#ddd" d="M596 491.500h180" edge="#4f6f72" />
      <Mullion core="#999b98" d="M596 585.500h180" edge="#789a9b" />
      <Mullion d="M685.500 259v388" />
      <path d="M595 326v322" stroke="#111" strokeWidth="3" />
      <Mullion d="M776.500 326v322" />
      <path d="M594 648h184" stroke="#111" strokeWidth="2" />

      {/* Gable fascia */}
      <path d="M594 327.500l91.500-68 91.500 68" stroke="#ccc" strokeWidth="2" />
      <path d="M574.500 326.500l111-82 112 82v13.500l-112-82-111 82z" fill="#8795ae" stroke="#333" />

      {windowRows.map((y) => windowColumns.map((x) => <FramedWindow key={`${x}-${y}`} x={x} y={y} />))}

      {/* Entrance doors */}
      <path d="M662.500 586.500h47v61h-47z" stroke="#111" strokeWidth="1.500" />
      <path d="M664 588v57M708 588v57M664 645.500h44" stroke="#e9e9e9" strokeWidth="1.500" />
      <path d="M685 588l-20 28 20 28M687 588l20 28-20 28" stroke="#123" />
      <path d="M685 587v60" stroke="#111" strokeWidth="2" />
      <path d="M682.500 621h2v6h-2zM686 621h2.500v6H686z" fill="#fff" stroke="#111" />

      {/* Plinth, steps and ground */}
      <path d="M427.500 648v15M335 647.500h90" stroke="#333" />
      <path d="M426 647.500h156M789 647.500h153" stroke="#111" />
      <path d="M581.500 649.500h208v13h-208z" fill="#fff" stroke="#111" />
      <path d="M581 654.500h208M584.500 651.500h202M584.500 652v10M786.500 652v10" stroke="#333" />
      <path d="M643 651h80v12h-80z" fill="#8d8f8f" />
      <path d="M643 651.500h80M643 654.500h80M643 657.500h80M643 660.500h80" stroke="#222" />
      <path d="M643.500 624v39M723 624v39" stroke="#111" strokeWidth="1.500" />
      <path d="M401 664h541v6H401z" fill="url(#soil)" />
      <path d="M401 664h81M482 663h460" stroke="#111" strokeWidth="2" />

      {/* Levels */}
      {levels.map(({ name, height, y }) => (
        <g key={name}>
          {name !== 'Level 1' && (
            <>
              <path d={`M596 ${y + 0.5}h180`} stroke="#9dbfc2" strokeWidth="2" />
              <path d={`M341 ${y}h602`} stroke="#4a4445" strokeDasharray="32 8 9 8" />
              <path d={`M626 ${y + 0.5}h149`} stroke="#111" strokeDasharray="32 8 9 8" strokeWidth="2" />
              <path d={`M596 ${y + 0.5}h5M609 ${y + 0.5}h9`} stroke="#111" strokeWidth="2" />
              <path d={`M335 ${y}h6`} stroke="#4a4445" />
            </>
          )}
          <path d={`M952 ${y}h9M968 ${y}h39`} stroke="#333" />
          <g fill="#000" fontFamily="Liberation Sans, Arial, sans-serif" fontSize="11" textAnchor="end">
            <text x="999" y={y - 2}>
              {name}
            </text>
            <text x="999" y={y + 10}>
              {height}
            </text>
          </g>
          <circle cx="1015.500" cy={y} fill="#fff" r="8" stroke="#0b33ad" />
          <path d={`M1015.500 ${y}v-8a8 8 0 0 0-8 8h16a8 8 0 0 1-8 8z`} fill="#0b33ad" />
        </g>
      ))}

      {/* Pointer */}
      <circle cx="882" cy="299" r="32.500" stroke="#f5ec10" strokeWidth="3" />
      <path d="M882 300v14l3.200-3 2.300 5 2-1-2.200-4.700h4.200z" fill="#fff" stroke="#222" strokeWidth=".8" />
    </svg>
  );
}

function NavigationBar() {
  return (
    <div className="absolute top-[2px] right-[2px] flex h-[110px] w-[33px] flex-col items-center rounded-md border-2 border-[#c4c4c4] bg-[#f5f5f5]">
      <button aria-label="Close navigation bar" className="mr-[2px] self-end">
        <svg aria-hidden="true" className="size-2" fill="none" viewBox="0 0 8 8">
          <circle cx="4" cy="4" r="3.500" stroke="#999" />
          <path d="M2.500 2.500l3 3M5.500 2.500l-3 3" stroke="#999" />
        </svg>
      </button>
      <button aria-label="Steering wheel 2D" className="mt-[10px]">
        <svg aria-hidden="true" className="h-[23px] w-6" fill="none" viewBox="0 0 24 23">
          <path d="M10 1h7c1 0 2 1 2 2v8c0 5-4 8-9 8s-9-3-9-9 4-9 9-9z" fill="#eceef1" stroke="#999" />
          <circle cx="10" cy="9" r="4" stroke="#999" />
          <path d="M4 16l3-4M13 12l3 3" stroke="#999" />
          <text fill="#6b8fc9" fontFamily="Open Sans, sans-serif" fontSize="8" fontWeight="700" x="12" y="21">
            2D
          </text>
        </svg>
      </button>
      <Caret className="mt-1 opacity-70" />
      <hr className="mt-1 w-6 border-[#c4c4c4]" />
      <button aria-label="Zoom region" className="mt-2">
        <svg aria-hidden="true" className="size-4" fill="none" viewBox="0 0 16 16">
          <path d="M1 1h10v10H1z" fill="#b3d19f" stroke="#8db876" />
          <circle cx="10.500" cy="10" fill="#f5f5f5" r="3" stroke="#888" />
          <path d="M12.500 12.500l3 3" stroke="#888" strokeWidth="1.500" />
        </svg>
      </button>
      <Caret className="mt-2 opacity-70" />
      <button aria-label="Navigation bar options" className="mt-auto mr-[2px] mb-[2px] self-end">
        <svg aria-hidden="true" className="size-2" fill="none" viewBox="0 0 8 8">
          <circle cx="4" cy="4" r="3.500" stroke="#999" />
          <path d="M2 4h4" stroke="#999" />
        </svg>
      </button>
    </div>
  );
}

const viewControls = [
  'detail',
  'visual',
  'sun',
  'shadow',
  'crop',
  'cropShow',
  'glasses',
  'bulb',
  'camera',
  'analytic',
  'constraint',
];

function ViewArea() {
  return (
    <main className="flex min-w-0 flex-1 flex-col">
      <div className="flex h-[21px] shrink-0 items-end bg-[#c9c9c9]">
        <button className="flex h-5 w-[121px] items-center gap-[6px] bg-[#c3c3c3] pl-1">
          <Icon name="plan" />
          Level 1
        </button>
        <div className="flex h-5 w-[150px] items-center justify-between bg-[#f3f3f3] px-1 text-[#222]">
          <button className="flex items-center gap-[6px] pl-[2px] font-bold">
            <Icon name="elevationTab" size="size-[14px]" />
            South Entry Prelim
          </button>
          <button aria-label="Close view">
            <Icon name="close" size="size-3" />
          </button>
        </div>
        <button aria-label="View list" className="ml-auto flex h-5 w-2 items-center">
          <svg aria-hidden="true" className="h-2 w-2" viewBox="0 0 8 8">
            <path d="M0 1h8M1 4h6L4 7z" fill="#333" stroke="#333" />
          </svg>
        </button>
      </div>
      <div className="flex min-h-0 flex-1">
        <div className="relative flex min-w-0 flex-1 overflow-hidden bg-white">
          <ElevationDrawing />
          <NavigationBar />
        </div>
        <div className="flex w-[11px] flex-col items-center bg-[#efefef] py-1 text-[#444]">
          <Chevron className="mt-1" turn="rotate-180" />
          <div className="mt-[221px] h-4 w-[11px] bg-[#c9c9c9]" />
          <Chevron className="mt-auto" />
        </div>
      </div>
      <div className="flex h-5 shrink-0 items-center bg-[#efefef]">
        <button className="w-[74px] pl-[25px] text-left whitespace-nowrap text-[#222]">1 : 100</button>
        {viewControls.map((name) => (
          <button aria-label={name} className="flex w-5 shrink-0 justify-center" key={name}>
            <Icon name={name} size="size-[15px]" />
          </button>
        ))}
        <Chevron className="ml-[3px]" turn="rotate-90" />
        <div className="mr-[340px] ml-auto h-[15px] w-4 bg-[#c9c9c9]" />
        <Chevron turn="-rotate-90" />
        <svg aria-hidden="true" className="mx-1 size-2" viewBox="0 0 8 8">
          <path d="M6 0h2v2H6zM3 3h2v2H3zM6 3h2v2H6zM0 6h2v2H0zM3 6h2v2H3zM6 6h2v2H6z" fill="#aaa" />
        </svg>
      </div>
    </main>
  );
}

/* ---------- Status bar ---------- */

const selectionToggles = [
  { name: 'selectLinks', label: 'Select links', pointer: true },
  { name: 'selectUnderlay', label: 'Select underlay elements', pointer: true },
  { name: 'selectPinned', label: 'Select pinned elements', pointer: true },
  { name: 'selectFace', label: 'Select elements by face', pointer: true },
  { name: 'dragSelect', label: 'Drag elements on selection', pointer: true },
  { name: 'progress', label: 'Background processes', pointer: false },
];

function StatusSelect({ label, value }: { label: string; value: string }) {
  return (
    <div className="relative">
      <select
        aria-label={label}
        className="block h-[18px] w-[195px] appearance-none border border-[#d8d8d8] bg-[#fdfdfd] pl-[2px] text-[11px] text-[#777]"
      >
        <option>{value}</option>
      </select>
      <Chevron className="pointer-events-none absolute top-[5px] right-1 text-[#aaa]" />
    </div>
  );
}

function StatusBar() {
  return (
    <footer className="flex h-6 shrink-0 items-center border-t border-[#dcdcdc] bg-[#c9c9c9]">
      <p className="w-[289px] font-[Roboto,sans-serif] whitespace-nowrap text-[#222]">
        Click to select, TAB for alternates, CTRL adds, SHIFT unsele
      </p>
      <button aria-label="Worksets" className="mx-[6px]">
        <Icon name="worksets" />
      </button>
      <StatusSelect label="Active workset" value="" />
      <button className="ml-[7px] flex items-center gap-[3px]">
        <Icon name="editable" />
        :0
      </button>
      <button aria-label="Design options" className="ml-[22px]">
        <Icon name="options" />
      </button>
      <button aria-label="Add to set" className="mr-[6px] ml-2">
        <Icon name="optionSet" />
      </button>
      <StatusSelect label="Active design option" value="Main Model" />
      <div className="mr-[83px] ml-auto flex items-center gap-2">
        {selectionToggles.map(({ name, label, pointer }) => (
          <button aria-label={label} className="relative" key={name}>
            <Icon name={name} />
            {pointer && (
              <svg aria-hidden="true" className="absolute top-1 left-2 h-3 w-2" viewBox="0 0 8 12">
                <path d="M.5.500v9l2-2 1.500 3.500 1.500-.500L4 7.200h3z" fill="#fff" stroke="#444" />
              </svg>
            )}
          </button>
        ))}
        <button className="flex items-center">
          <Icon name="funnel" />
          :0
        </button>
      </div>
    </footer>
  );
}

export default function App() {
  return (
    <div className="flex h-screen flex-col overflow-hidden bg-[#c9c9c9] font-['Open_Sans',sans-serif] text-[11px] text-[#3c3c3c]">
      <TitleBar />
      <Tabs />
      <Ribbon />
      <div className="h-[26px] shrink-0 border-b border-[#d0d0d0] bg-[#efefef]" />
      <div className="flex min-h-0 flex-1">
        <aside className="mr-[2px] flex w-[255px] shrink-0 flex-col border-t border-r border-[#c4c4c4] bg-[#efefef]">
          <Properties />
          <ProjectBrowser />
        </aside>
        <ViewArea />
      </div>
      <StatusBar />
      {/* Desktop showing below the window */}
      <div className="h-[6px] shrink-0 bg-linear-to-r from-[#5a6a80] via-[#33456b] to-[#4c5a45]" />
    </div>
  );
}
